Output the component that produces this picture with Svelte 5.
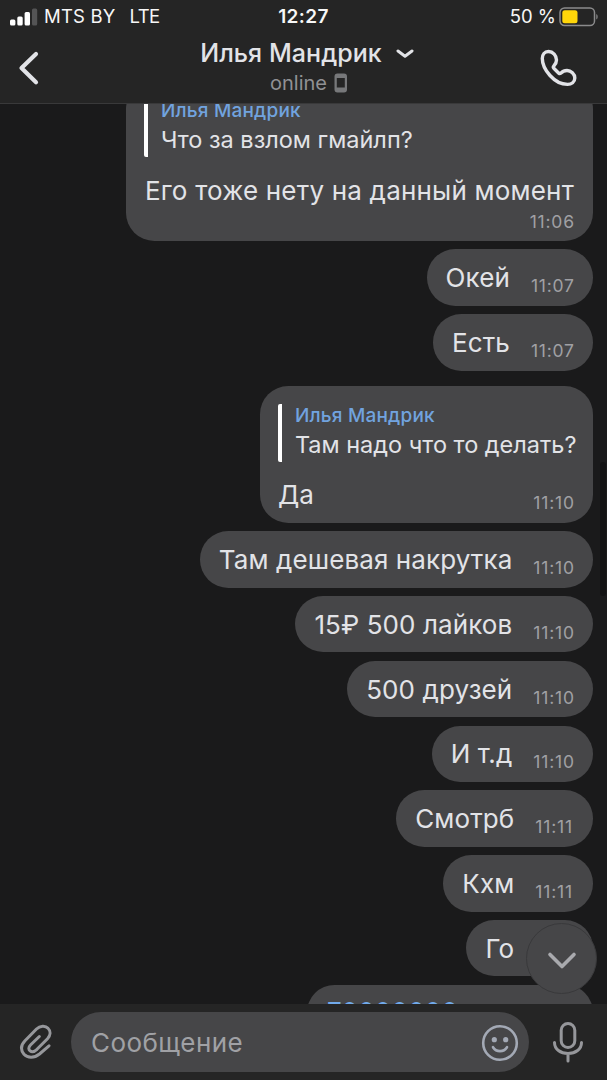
<script>
  const contact = "Илья Мандрик";

  let messages = [
    { text: "Его тоже нету на данный момент", time: "11:06", quote: "Что за взлом гмайлп?", stacked: true },
    { text: "Окей", time: "11:07" },
    { text: "Есть", time: "11:07" },
    { text: "Да", time: "11:10", quote: "Там надо что то делать?" },
    { text: "Там дешевая накрутка", time: "11:10" },
    { text: "15₽ 500 лайков", time: "11:10" },
    { text: "500 друзей", time: "11:10" },
    { text: "И т.д", time: "11:10" },
    { text: "Смотрб", time: "11:11" },
    { text: "Кхм", time: "11:11" },
    { text: "Го", time: "11:11" },
    { text: "70000000", time: "11:11", link: true },
  ];
</script>

<main>
  <header>
    <div class="status-bar">
      <div class="carrier">
        <svg width="28" height="18" viewBox="0 0 28 18">
          <rect x="0" y="11.5" width="5.4" height="6" rx="1.5" fill="#fff" />
          <rect x="7.3" y="8.5" width="5.4" height="9" rx="1.5" fill="#fff" />
          <rect x="14.6" y="4" width="5.4" height="13.5" rx="1.5" fill="#fff" />
          <rect x="22" y="0.5" width="5.2" height="17" rx="1.5" fill="#545455" />
        </svg>
        <span class="operator">MTS BY</span>
        <span class="network">LTE</span>
      </div>
      <div class="clock">12:27</div>
      <div class="battery">
        <span>50 %</span>
        <svg width="40" height="20" viewBox="0 0 40 20">
          <rect x="1" y="1" width="34.5" height="17.5" rx="4.5" fill="none" stroke="#8b8b8c" stroke-width="1.5" />
          <rect x="3.3" y="3.3" width="15.2" height="13" rx="2.5" fill="#ffd60a" />
          <path d="M37.3 7v5.5c1.8-.9 1.8-4.6 0-5.5z" fill="#8b8b8c" />
        </svg>
      </div>
    </div>

    <div class="nav-bar">
      <svg class="back" width="24" height="36" viewBox="0 0 24 36">
        <path d="M19 4 4.5 18 19 32.2" />
      </svg>
      <div class="peer">
        <div class="peer-name">
          <span>{contact}</span>
          <svg width="18" height="10" viewBox="0 0 18 10">
            <path d="M2 2l7 5.2L16 2" />
          </svg>
        </div>
        <div class="peer-status">
          <span>online</span>
          <svg width="14" height="20" viewBox="0 0 14 20">
            <path
              fill-rule="evenodd"
              d="M3.5.5h6.5a3 3 0 0 1 3 3v13a3 3 0 0 1-3 3H3.5a3 3 0 0 1-3-3v-13a3 3 0 0 1 3-3zM2.8 5v9.5h8V5z" />
          </svg>
        </div>
      </div>
      <svg class="call" width="40" height="40" viewBox="0 0 40 40">
        <path
          d="M9.5 3.5C14 3.5 17.5 7.5 17.5 12C17.5 14.5 16.5 16.3 14.8 18C14.2 18.7 14.2 19.5 14.8 20.2L19.8 25.2C20.5 25.8 21.2 25.7 21.9 25.2C23.8 23.2 25.5 22.5 28 22.5C32 22.5 35.8 25.8 35.8 30C35.8 34 32.5 36.4 28.5 36.4C22 36.4 15.5 32.5 11 27.5C6.5 22.5 3.3 16.5 3.3 10.5C3.3 6.5 5.5 3.5 9.5 3.5Z" />
      </svg>
    </div>
  </header>

  <section class="messages">
    {#each messages as message}
      <div
        class="bubble"
        class:with-quote={message.quote}
        class:stacked={message.stacked}
        class:with-link={message.link}>
        {#if message.quote}
          <blockquote>
            <div class="author">{contact}</div>
            <div class="quoted">{message.quote}</div>
          </blockquote>
        {/if}
        <div class="body">
          <span class="text">{message.text}</span>
          <time>{message.time}</time>
        </div>
      </div>
    {/each}
    <div class="scroll-thumb"></div>
    <button class="scroll-down" aria-label="Вниз">
      <svg width="32" height="20" viewBox="0 0 32 20">
        <path d="M4 3.5 16 15.5 28 3.5" />
      </svg>
    </button>
  </section>

  <footer>
    <svg class="attach" width="36" height="42" viewBox="0 0 36 42">
      <path
        d="M31 24.8L21.5 33C16 37.5 9.5 37 6 33.2C2.5 29 3 24 7 19.8L18.5 8C22 4.5 27.5 4.3 30 7.3C33 10.3 32.5 14.5 29.5 17.7L19 28.3C13.5 33.5 8 28.5 12.5 24L21.3 15.5" />
    </svg>
    <div class="field">
      <span>Сообщение</span>
      <svg width="38" height="38" viewBox="0 0 38 38">
        <circle cx="19" cy="19" r="16.8" fill="none" />
        <circle class="eye" cx="13.3" cy="15.7" r="2.6" />
        <circle class="eye" cx="24.7" cy="15.7" r="2.6" />
        <path d="M12 23.2c3.3 5.2 10.7 5.2 14 0" fill="none" />
      </svg>
    </div>
    <svg class="mic" width="34" height="44" viewBox="0 0 34 44">
      <rect x="10.2" y="3.5" width="13.6" height="24" rx="6.8" />
      <path d="M3.5 22.5c0 6.8 6 11 13.5 11s13.5-4.2 13.5-11M17 33.5V41" />
    </svg>
  </footer>
</main>

<style>
  :global(body) {
    background: #1a1a1b;
  }

  main {
    width: 607px;
    height: 1080px;
    display: flex;
    flex-direction: column;
    overflow: hidden;
    background: #1a1a1b;
    color: #e2e3e7;
    font-family: "Inter", "Liberation Sans", sans-serif;
  }

  svg {
    display: block;
    flex: none;
  }

  header {
    flex: none;
    box-sizing: border-box;
    height: 104px;
    background: #252525;
    border-bottom: 1px solid #39393a;
  }

  .status-bar {
    display: flex;
    height: 33px;
    align-items: center;
    color: #f7f7f7;
    font-size: 18.5px;
    line-height: 33px;
  }
  .carrier,
  .battery {
    flex: 1;
    display: flex;
    align-items: center;
  }
  .carrier {
    padding-left: 10px;
  }
  .operator {
    margin-left: 6px;
    letter-spacing: 0.2px;
  }
  .network {
    margin-left: 14px;
    letter-spacing: -0.6px;
  }
  .clock {
    font-weight: 600;
    font-size: 19px;
    letter-spacing: 0.4px;
    margin-left: -2px;
  }
  .battery {
    justify-content: flex-end;
    padding-right: 8px;
  }
  .battery svg {
    margin-left: 3px;
  }

  .nav-bar {
    display: flex;
    height: 70px;
    align-items: center;
    padding: 0 28px 0 17px;
  }
  .back path,
  .call path,
  .peer-name path {
    fill: none;
    stroke: #e2e3e7;
    stroke-linecap: round;
    stroke-linejoin: round;
  }
  .back path {
    stroke-width: 4.2;
  }
  .call path {
    stroke-width: 3.4;
  }
  .peer {
    flex: 1;
    display: flex;
    flex-direction: column;
    align-items: center;
    margin-top: -2px;
    padding-left: 34px;
  }
  .peer-name {
    display: flex;
    align-items: center;
    font-size: 25px;
    font-weight: 500;
    line-height: 32px;
    letter-spacing: 0.05px;
  }
  .peer-name svg {
    margin: 2px 0 0 14px;
  }
  .peer-name path {
    stroke-width: 3;
  }
  .peer-status {
    display: flex;
    align-items: center;
    color: #909194;
    font-size: 20px;
    line-height: 28px;
    padding-left: 4px;
  }
  .peer-status svg {
    margin-left: 7px;
    fill: #77787a;
  }

  .messages {
    position: relative;
    flex: 1;
    min-height: 0;
    display: flex;
    flex-direction: column;
    align-items: flex-end;
    gap: 8.3px;
    padding-right: 14px;
    overflow: hidden;
  }

  .bubble {
    flex: none;
    box-sizing: border-box;
    padding: 0 19px;
    border-radius: 28.25px;
    background: #464648;
  }
  .body {
    box-sizing: border-box;
    display: flex;
    align-items: center;
    justify-content: space-between;
    height: 56.5px;
    padding-top: 1px;
  }
  .text {
    font-size: 26px;
    line-height: 32px;
    letter-spacing: 0.1px;
    white-space: nowrap;
  }
  time {
    min-width: 39.5px;
    margin: 0 -0.8px 0 21px;
    padding-top: 16px;
    color: #a0a0a4;
    font-size: 17.5px;
    line-height: 24px;
    letter-spacing: 0.8px;
  }

  .with-quote {
    margin-top: 7px;
    padding: 18.5px 16.5px 0 18px;
  }
  .with-quote .body {
    height: 60px;
    margin-top: 0.5px;
    padding: 4px 2.5px 0 0;
  }
  .with-quote.stacked {
    margin-top: -23.5px;
  }
  .stacked .body {
    flex-direction: column;
    align-items: flex-end;
    justify-content: flex-start;
    height: 83.5px;
    padding-top: 17px;
    padding-left: 1px;
  }
  .stacked .text {
    letter-spacing: 0.2px;
  }
  .stacked time {
    padding: 3px 0 0;
  }

  .with-link {
    min-width: 286px;
    padding-left: 20px;
  }
  .with-link .body {
    height: 55px;
    padding-top: 0;
  }
  .with-link .text {
    color: #71aaeb;
    letter-spacing: 0.25px;
  }

  blockquote {
    box-sizing: border-box;
    height: 58px;
    margin: 0;
    padding-left: 13px;
    border-left: 4px solid #fff;
    border-radius: 2px;
  }
  .author {
    color: #71a3df;
    font-size: 19px;
    font-weight: 500;
    line-height: 23px;
    letter-spacing: 0.2px;
  }
  .quoted {
    font-size: 23.5px;
    line-height: 35px;
    white-space: nowrap;
  }

  .scroll-thumb {
    position: absolute;
    top: 358px;
    right: 1px;
    width: 6px;
    height: 134px;
    border-radius: 3px;
    background: #131314;
  }
  .scroll-down {
    position: absolute;
    right: 10px;
    bottom: 10px;
    display: flex;
    align-items: center;
    justify-content: center;
    width: 71px;
    height: 71px;
    padding: 4px 0 0;
    border: 1.5px solid #39393b;
    border-radius: 50%;
    background: #464648;
  }
  .scroll-down path {
    fill: none;
    stroke: #a9aaae;
    stroke-width: 3.6;
    stroke-linecap: round;
    stroke-linejoin: round;
  }

  footer {
    flex: none;
    box-sizing: border-box;
    display: flex;
    align-items: center;
    height: 76px;
    padding: 0 22px 0 18px;
    background: #252525;
  }
  .attach path,
  .mic rect,
  .mic path {
    fill: none;
    stroke: #96979b;
    stroke-width: 3;
    stroke-linecap: round;
    stroke-linejoin: round;
  }
  .field {
    flex: 1;
    box-sizing: border-box;
    display: flex;
    align-items: center;
    justify-content: space-between;
    height: 60px;
    margin: 0 22px 0 17px;
    padding: 0 10px 0 20px;
    border-radius: 30px;
    background: #464648;
    color: #a0a1a5;
    font-size: 26px;
    letter-spacing: 0.45px;
  }
  .field svg {
    margin-top: 1px;
    stroke: #a3a9b5;
    stroke-width: 2.6;
    stroke-linecap: round;
  }
  .field .eye {
    fill: #a3a9b5;
    stroke: none;
  }
</style>
